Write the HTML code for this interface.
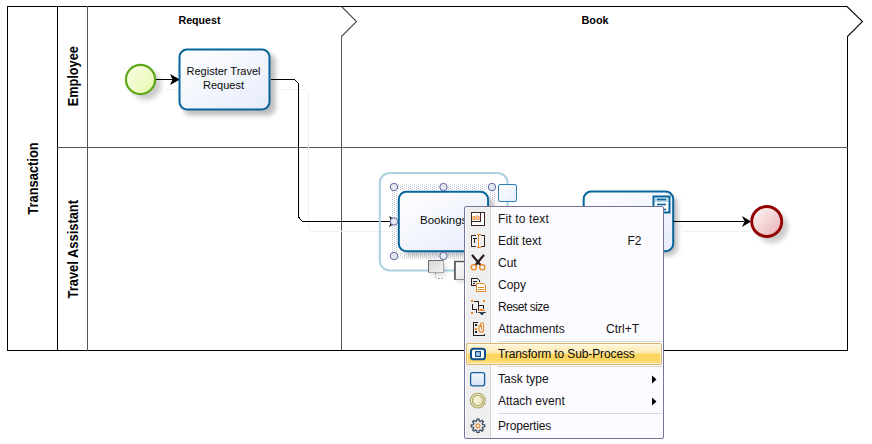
<!DOCTYPE html>
<html><head><meta charset="utf-8">
<style>
html,body{margin:0;padding:0;background:#fff;width:872px;height:444px;overflow:hidden;}
body{position:relative;font-family:"Liberation Sans",sans-serif;}
svg{position:absolute;left:0;top:0;}
.menu{position:absolute;left:464px;top:206px;width:198px;height:231px;border:1px solid #77749a;border-radius:2px;background:#fcfbff;}
.menu .col{position:absolute;left:1px;top:0;width:24px;height:231px;background:#efefef;border-right:1px solid #d2d2d2;box-shadow:1px 0 0 #fff;}
.mi{position:absolute;left:33px;font-size:12px;line-height:14px;color:#141414;white-space:nowrap;}
.sc{position:absolute;font-size:12px;line-height:14px;color:#141414;white-space:nowrap;}
.sep{position:absolute;left:33px;width:164px;height:1px;background:#d7d7d7;}
.ic{position:absolute;left:4px;width:18px;height:18px;}
</style></head><body>
<!-- pool lines -->
<svg width="872" height="444" viewBox="0 0 872 444" shape-rendering="crispEdges">
  <path d="M847 6.5 H7.5 V350.5 H847.5 V36" fill="none" stroke="#000" stroke-width="1"/>
  <line x1="57.5" y1="6" x2="57.5" y2="351" stroke="#000"/>
  <line x1="87.5" y1="6" x2="87.5" y2="351" stroke="#555"/>
  <line x1="57" y1="147.5" x2="848" y2="147.5" stroke="#555"/>
  <line x1="341.5" y1="36" x2="341.5" y2="350" stroke="#555"/>
</svg>
<svg width="872" height="444" viewBox="0 0 872 444">
  <path d="M341.5 6.5 L356.5 21.5 L341.5 36.5" fill="none" stroke="#4a4a4a" stroke-width="1.1"/>
  <path d="M847 6.5 L862.5 21.5 L847.5 36.5" fill="none" stroke="#111" stroke-width="1.1"/>
  <g font-family="Liberation Sans" font-weight="bold" fill="#000">
    <text x="199.5" y="23.7" font-size="11" text-anchor="middle" textLength="42" lengthAdjust="spacingAndGlyphs">Request</text>
    <text x="595" y="23.7" font-size="11" text-anchor="middle" textLength="27" lengthAdjust="spacingAndGlyphs">Book</text>
    <text transform="translate(38,178.5) rotate(-90)" font-size="14" text-anchor="middle" textLength="72.5" lengthAdjust="spacingAndGlyphs">Transaction</text>
    <text transform="translate(78.4,76.2) rotate(-90)" font-size="14" text-anchor="middle" textLength="60" lengthAdjust="spacingAndGlyphs">Employee</text>
    <text transform="translate(78.4,249.2) rotate(-90)" font-size="14" text-anchor="middle" textLength="98.5" lengthAdjust="spacingAndGlyphs">Travel Assistant</text>
  </g>
</svg>

<svg width="872" height="444" viewBox="0 0 872 444">
  <defs>
    <linearGradient id="gStart" x1="0" y1="0" x2="1" y2="1"><stop offset="0" stop-color="#fbfee9"/><stop offset="1" stop-color="#e6f7ad"/></linearGradient>
    <linearGradient id="gEnd" x1="0" y1="0" x2="1" y2="1"><stop offset="0.1" stop-color="#fdf3f3"/><stop offset="1" stop-color="#e7adb2"/></linearGradient>
    <linearGradient id="gTask" x1="0" y1="0" x2="1" y2="1"><stop offset="0" stop-color="#ffffff"/><stop offset="1" stop-color="#e6ecfb"/></linearGradient>
    <linearGradient id="gGray" x1="0" y1="0" x2="1" y2="1"><stop offset="0" stop-color="#d6d6d6"/><stop offset="1" stop-color="#f2f2f2"/></linearGradient>
    <linearGradient id="gWhite" x1="0" y1="0" x2="1" y2="1"><stop offset="0" stop-color="#ffffff"/><stop offset="1" stop-color="#e8e8e8"/></linearGradient>
    <filter id="sh" x="-30%" y="-30%" width="160%" height="160%"><feGaussianBlur stdDeviation="2.5"/></filter>
    <pattern id="dots" width="4" height="2" patternUnits="userSpaceOnUse"><rect x="2" y="0" width="1" height="1" fill="#c4c8da"/><rect x="0" y="1" width="1" height="1" fill="#c4c8da"/></pattern>
  </defs>
  <!-- faint ghost connector -->
  <path d="M281 89.5 H304 Q308.5 89.5 308.5 94 V227 Q308.5 231.5 313 231.5 H395" fill="none" stroke="#f0f0f0" stroke-width="1"/>
  <path d="M165 89.5 H178" fill="none" stroke="#f0f0f0" stroke-width="1"/>
  <path d="M683 231.5 H751" fill="none" stroke="#f0f0f0" stroke-width="1"/>
  <!-- start event -->
  <circle cx="146" cy="85" r="15" fill="#000" opacity="0.2" filter="url(#sh)"/>
  <circle cx="140.5" cy="79.5" r="14.6" fill="url(#gStart)" stroke="#5ea81a" stroke-width="2.2"/>
  <!-- flow 1 -->
  <line x1="156" y1="79.5" x2="178" y2="79.5" stroke="#000" stroke-width="1"/>
  <path d="M180 79.5 L170 74 L172.5 79.5 L170 85 Z" fill="#000"/>
  <!-- task 1 -->
  <rect x="183.5" y="53.5" width="92" height="62" rx="8" fill="#000" opacity="0.25" filter="url(#sh)"/>
  <rect x="179.5" y="49.5" width="90" height="60" rx="7.5" fill="url(#gTask)" stroke="#07659b" stroke-width="2"/>
  <text x="223.5" y="75" font-family="Liberation Sans" font-size="11" fill="#0a0a0a" text-anchor="middle" textLength="74" lengthAdjust="spacingAndGlyphs">Register Travel</text>
  <text x="223.5" y="89" font-family="Liberation Sans" font-size="11" fill="#0a0a0a" text-anchor="middle">Request</text>
  <!-- connector to bookings -->
  <path d="M271 79.5 H294.5 L298.5 83.5 V217 L302.5 221.5 H392" fill="none" stroke="#000" stroke-width="1" shape-rendering="crispEdges"/>
  <!-- bookings selection outline -->
  <rect x="379.8" y="172.9" width="127.7" height="97.5" rx="10" fill="none" stroke="#abd0e0" stroke-width="2"/>
  <!-- dotted selection band -->
  <path d="M391 184 H495 V259 H391 Z M397 190 V253 H489 V190 Z" fill="url(#dots)" fill-rule="evenodd" shape-rendering="crispEdges"/>
  <rect x="402.8" y="195.8" width="90" height="60" rx="8" fill="#000" opacity="0.22" filter="url(#sh)"/>
  <rect x="398.8" y="191.8" width="89.3" height="59.4" rx="7.5" fill="url(#gTask)" stroke="#07659b" stroke-width="2"/>
  <text x="420" y="223.7" font-family="Liberation Sans" font-size="11.5" fill="#0a0a0a">Bookings</text>
  <!-- handles -->
  <g fill="#e6e8f0" stroke="#5f69a3" stroke-width="1">
    <circle cx="394" cy="187" r="3.7"/><circle cx="443.5" cy="187" r="3.7"/><circle cx="492" cy="187" r="3.7"/>
    <circle cx="394" cy="256" r="3.7"/><circle cx="443.5" cy="256" r="3.7"/>
  </g>
  <!-- arrow into bookings -->
  <path d="M398 221.5 L389 216 L391.5 221.5 L389 227 Z" fill="#000"/>
  <circle cx="394" cy="221.5" r="3.7" fill="#e6e8f0" stroke="#5f69a3" stroke-width="1"/>
  <!-- palette square -->
  <rect x="498.5" y="184.5" width="18" height="17" rx="1.5" fill="url(#gTask)" stroke="#2f7db5" stroke-width="1"/>
  <!-- small gray box -->
  <rect x="431" y="263" width="15" height="12" fill="#000" opacity="0.15" filter="url(#sh)"/>
  <rect x="428.5" y="260.5" width="15" height="12" fill="url(#gGray)" stroke="#a8a8a8" stroke-width="1"/>
  <path d="M428.5 272 V260.5 H443" fill="none" stroke="#6a6a6a" stroke-width="1"/>
  <path d="M435.5 273 V276 Q435.5 278.5 438 278.5 H443" fill="none" stroke="#9a9a9a" stroke-width="1" stroke-dasharray="2 1.5"/>
  <rect x="457" y="264" width="12" height="18" fill="#000" opacity="0.15" filter="url(#sh)"/>
  <rect x="454.5" y="261.5" width="12" height="18" fill="url(#gWhite)" stroke="#8a8a8a" stroke-width="1"/>
  <path d="M455 279.5 V261.5 H466" fill="none" stroke="#555" stroke-width="1.6"/>
  <!-- task 2 -->
  <rect x="587.7" y="195.6" width="90" height="60" rx="8" fill="#000" opacity="0.25" filter="url(#sh)"/>
  <rect x="583.7" y="191.6" width="89.5" height="59.6" rx="7.5" fill="url(#gTask)" stroke="#07659b" stroke-width="2"/>
  <g>
    <rect x="653.5" y="196.5" width="16" height="16" fill="#fff" stroke="#07659b" stroke-width="2"/>
    <rect x="655" y="198" width="13" height="4" fill="#b9d3ea"/>
    <line x1="657" y1="199.5" x2="666" y2="199.5" stroke="#07659b" stroke-width="1.6"/>
    <line x1="657" y1="204.5" x2="666" y2="204.5" stroke="#07659b" stroke-width="1.6"/>
    <line x1="657" y1="209.5" x2="666" y2="209.5" stroke="#07659b" stroke-width="1.6"/>
  </g>
  <!-- flow to end -->
  <line x1="673" y1="221.5" x2="744" y2="221.5" stroke="#000" stroke-width="1"/>
  <path d="M751 221.5 L742 216 L744.5 221.5 L742 227 Z" fill="#000"/>
  <!-- end event -->
  <circle cx="772" cy="227" r="16" fill="#000" opacity="0.2" filter="url(#sh)"/>
  <circle cx="766.7" cy="221.5" r="15" fill="url(#gEnd)" stroke="#930000" stroke-width="2.9"/>
</svg>

<div class="menu">
  <div class="col"></div>
  <div class="mi" style="top:5px;letter-spacing:0.15px;">Fit to text</div>
  <div class="mi" style="top:27px;">Edit text</div>
  <div class="sc" style="left:162.5px;top:27px;">F2</div>
  <div class="mi" style="top:49px;">Cut</div>
  <div class="mi" style="top:71px;">Copy</div>
  <div class="mi" style="top:93px;letter-spacing:-0.5px;">Reset size</div>
  <div class="mi" style="top:115px;">Attachments</div>
  <div class="sc" style="left:141px;top:115px;">Ctrl+T</div>
  <div class="sep" style="top:134px;"></div>
  <div style="position:absolute;left:1px;top:136px;width:194px;height:20px;border:1px solid #d9b76e;border-radius:2px;box-shadow:inset 0 0 0 1px rgba(255,255,255,0.55);background:linear-gradient(#fef6d8 0%,#fdeab0 45%,#fdd45e 52%,#fdd764 80%,#fde18a 100%);"></div>
  <div class="mi" style="top:140px;letter-spacing:-0.12px;color:#0c0c0c;">Transform to Sub-Process</div>
  <div class="sep" style="top:159px;"></div>
  <div class="mi" style="top:165px;">Task type</div>
  <div class="mi" style="top:187px;">Attach event</div>
  <div class="sep" style="top:206px;"></div>
  <div class="mi" style="top:212px;letter-spacing:-0.15px;">Properties</div>
</div>
<svg width="872" height="444" viewBox="0 0 872 444" style="pointer-events:none">
  <defs>
    <linearGradient id="gTT" x1="0" y1="0" x2="0" y2="1"><stop offset="0" stop-color="#f4f7fd"/><stop offset="1" stop-color="#d6e2f6"/></linearGradient>
    <radialGradient id="gAE" cx="0.4" cy="0.4" r="0.7"><stop offset="0" stop-color="#f7f5dc"/><stop offset="1" stop-color="#e6e0b0"/></radialGradient>
  </defs>
  <!-- fit to text -->
  <g shape-rendering="crispEdges">
    <rect x="471.5" y="212.5" width="13" height="13" fill="#fff" stroke="#3a2424" stroke-width="1"/>
    <rect x="472" y="213" width="8" height="8" fill="#fff"/>
    <path d="M480.5 213 V221.5 H472" fill="none" stroke="#3a2424" stroke-width="1"/>
  </g>
  <text x="472.2" y="219.8" font-family="Liberation Sans" font-weight="bold" font-size="7.5" fill="#e8892a" textLength="8" lengthAdjust="spacingAndGlyphs">ab</text>
  <!-- edit text -->
  <g fill="none" stroke-width="1" shape-rendering="crispEdges">
    <path d="M476 235.5 H471.5 V246.5 H476" stroke="#3a2424"/>
    <path d="M481 235.5 H484.5 V246.5 H481" stroke="#3a2424"/>
    <path d="M473 238.5 H476.5 M474.5 238.5 V243" stroke="#222" stroke-width="1.3"/>
    <path d="M478.5 234.5 V247.5 M476.5 234.5 H481 M476.5 247.5 H481" stroke="#e8892a"/>
  </g>
  <!-- cut -->
  <g>
    <path d="M472.5 255.5 L480 264.5" stroke="#2a1c1c" stroke-width="2.2" stroke-linecap="round"/>
    <path d="M483.5 255.5 L476 264.5" stroke="#2a1c1c" stroke-width="2.2" stroke-linecap="round"/>
    <circle cx="473.8" cy="267.2" r="2.6" fill="none" stroke="#e8892a" stroke-width="1.3"/>
    <circle cx="482.3" cy="267.2" r="2.6" fill="none" stroke="#e8892a" stroke-width="1.3"/>
  </g>
  <!-- copy -->
  <g shape-rendering="crispEdges" fill="none" stroke-width="1">
    <path d="M471.5 285.5 V278.5 H477.5 L479.5 280.5 V282" stroke="#2a1c1c"/>
    <path d="M471.5 285.5 H476" stroke="#2a1c1c"/>
    <path d="M473 281.5 H477 M473 283.5 H475" stroke="#2a1c1c"/>
    <path d="M476.5 291.5 V283.5 H483.5 L485.5 285.5 V291.5 Z" stroke="#e8892a" fill="#fff"/>
    <path d="M478 287.5 H484 M478 289.5 H484" stroke="#e8892a"/>
  </g>
  <!-- reset size -->
  <g shape-rendering="crispEdges">
    <rect x="471" y="300" width="2" height="2" fill="#e8892a"/>
    <rect x="483" y="300" width="2" height="2" fill="#e8892a"/>
    <rect x="471" y="312" width="2" height="2" fill="#e8892a"/>
    <path d="M474 301.5 H478.5 V305.5 H483.5 V309 M472.5 304 V309.5 H476.5 V313 M478.5 305.5 V310" fill="none" stroke="#2a1c1c" stroke-width="1"/>
    <path d="M478 310.5 H485" stroke="#e8892a" stroke-width="1"/>
    <path d="M480 309.5 H483" stroke="#e8892a" stroke-width="1"/>
    <path d="M478 312.5 H486 M480 313.5 H484 M481 314.5 H483" stroke="#344558" stroke-width="1"/>
  </g>
  <!-- attachments -->
  <g shape-rendering="crispEdges" fill="none" stroke-width="1">
    <path d="M478 322.5 H473.5 V335.5 H484.5 V334" stroke="#2a1c1c"/>
    <rect x="475" y="324" width="2" height="2" fill="#2a1c1c" stroke="none"/>
    <rect x="475" y="327.5" width="2" height="2" fill="#e8892a" stroke="none"/>
    <rect x="475" y="331" width="2" height="2" fill="#2a1c1c" stroke="none"/>
  </g>
  <path d="M480.5 327 V324.5 Q480.5 322.8 482 322.8 Q483.5 322.8 483.5 324.5 V330 Q483.5 332 481.5 332 Q479 332 479 330 V325" fill="none" stroke="#e8892a" stroke-width="1.1"/>
  <path d="M481.3 325 V329.5" fill="none" stroke="#e8892a" stroke-width="1"/>
  <!-- transform to sub-process -->
  <rect x="471" y="348.8" width="14" height="10.4" rx="2.5" fill="#fff" stroke="#0f4f8c" stroke-width="2"/>
  <rect x="475.6" y="351.6" width="4.8" height="4.8" fill="#b8d0e8" stroke="#0f4f8c" stroke-width="1.2"/>
  <!-- task type -->
  <rect x="470.6" y="372.6" width="14" height="13.2" rx="2" fill="url(#gTT)" stroke="#14609c" stroke-width="1.3"/>
  <!-- attach event -->
  <circle cx="477.8" cy="400.6" r="7.4" fill="#f6f4de" stroke="#a9a25c" stroke-width="1.1"/>
  <circle cx="477.8" cy="400.6" r="5.4" fill="url(#gAE)" stroke="#aaa35e" stroke-width="1.1"/>
  <!-- properties gear -->
  <g transform="translate(478,425.8)">
    <path d="M6.72 -1.06 L6.72 1.06 L4.65 1.19 L4.13 2.44 L5.50 4.00 L4.00 5.50 L2.44 4.13 L1.19 4.65 L1.06 6.72 L-1.06 6.72 L-1.19 4.65 L-2.44 4.13 L-4.00 5.50 L-5.50 4.00 L-4.13 2.44 L-4.65 1.19 L-6.72 1.06 L-6.72 -1.06 L-4.65 -1.19 L-4.13 -2.44 L-5.50 -4.00 L-4.00 -5.50 L-2.44 -4.13 L-1.19 -4.65 L-1.06 -6.72 L1.06 -6.72 L1.19 -4.65 L2.44 -4.13 L4.00 -5.50 L5.50 -4.00 L4.13 -2.44 L4.65 -1.19 Z" fill="none" stroke="#34445a" stroke-width="1.2"/>
    <circle r="2" fill="none" stroke="#e8892a" stroke-width="1.2"/>
  </g>
  <!-- submenu arrows -->
  <path d="M652 375.5 L656.5 379.5 L652 383.5 Z" fill="#000"/>
  <path d="M652 397.5 L656.5 401.5 L652 405.5 Z" fill="#000"/>
</svg>
</body></html>
